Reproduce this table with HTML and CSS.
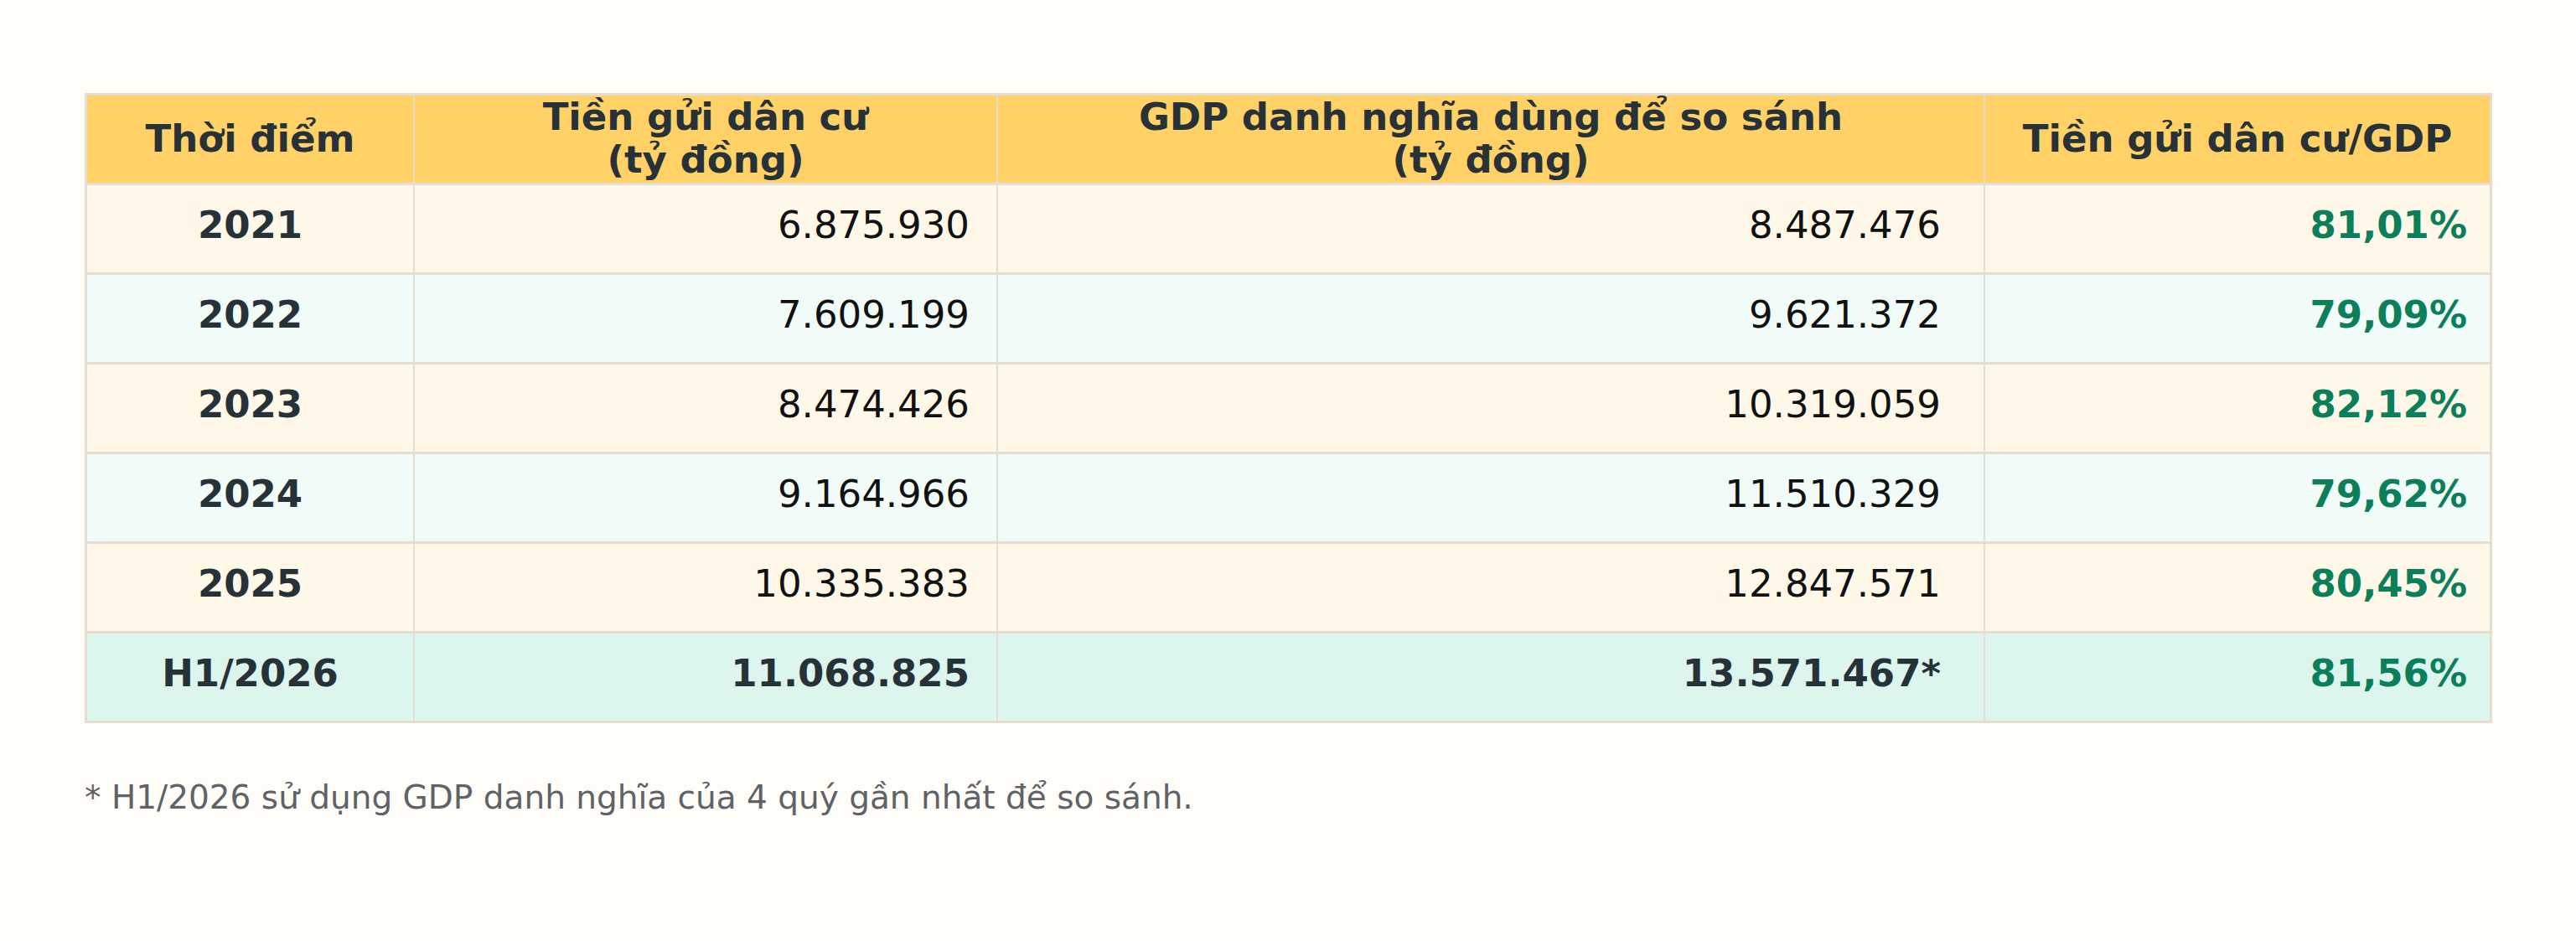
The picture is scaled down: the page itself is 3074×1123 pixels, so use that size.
FILE: index.html
```html
<!DOCTYPE html>
<html lang="vi">
<head>
<meta charset="utf-8">
<title>Tiền gửi dân cư / GDP</title>
<link rel="stylesheet" href="styles.css">
</head>
<body>
<main class="page">
  <table class="data">
    <colgroup>
      <col class="c1"><col class="c2"><col class="c3"><col class="c4">
    </colgroup>
    <thead>
      <tr>
        <th>Thời điểm</th>
        <th>Tiền gửi dân cư<br>(tỷ đồng)</th>
        <th>GDP danh nghĩa dùng để so sánh<br>(tỷ đồng)</th>
        <th>Tiền gửi dân cư/GDP</th>
      </tr>
    </thead>
    <tbody>
      <tr class="odd"><td class="year">2021</td><td class="num n2">6.875.930</td><td class="num n3">8.487.476</td><td class="pct">81,01%</td></tr>
      <tr class="even"><td class="year">2022</td><td class="num n2">7.609.199</td><td class="num n3">9.621.372</td><td class="pct">79,09%</td></tr>
      <tr class="odd"><td class="year">2023</td><td class="num n2">8.474.426</td><td class="num n3">10.319.059</td><td class="pct">82,12%</td></tr>
      <tr class="even"><td class="year">2024</td><td class="num n2">9.164.966</td><td class="num n3">11.510.329</td><td class="pct">79,62%</td></tr>
      <tr class="odd"><td class="year">2025</td><td class="num n2">10.335.383</td><td class="num n3">12.847.571</td><td class="pct">80,45%</td></tr>
      <tr class="last"><td class="year">H1/2026</td><td class="num n2 strong">11.068.825</td><td class="num n3 strong">13.571.467*</td><td class="pct">81,56%</td></tr>
    </tbody>
  </table>
  <p class="note">* H1/2026 sử dụng GDP danh nghĩa của 4 quý gần nhất để so sánh.</p>
</main>
</body>
</html>
```

FILE: styles.css
```css
html, body {
  margin: 0;
  padding: 0;
  background: #fffdf7;
}
body {
  font-family: "DejaVu Sans", "Noto Sans", sans-serif;
  color: #263238;
}
.page {
  padding: 111px 0 0 101px;
}
.data {
  width: 2873px;
  table-layout: fixed;
  border-collapse: separate;
  border-spacing: 0;
  border: 3px solid #e6ddd0;
  font-size: 45px;
  line-height: 52px;
}
.c1 { width: 391px; }
.c2 { width: 696px; }
.c3 { width: 1178px; }
.c4 { width: 602px; }

.data th,
.data td {
  box-sizing: border-box;
  border-right: 2px solid #e6ddd0;
}
.data th:last-child,
.data td:last-child {
  border-right: none;
}
.data th {
  background: #ffd166;
  font-weight: bold;
  text-align: center;
  vertical-align: middle;
  line-height: 51px;
  padding: 0 10px 2px 10px;
  height: 104px;
  color: #263238;
}
.data td {
  border-top: 3px solid #e6ddd0;
  padding: 22px 30px 30px 10px;
}
.odd td { background: #fff8e8; }
.even td { background: #f1fbf8; }
.last td { background: #dcf6ee; }

.year {
  text-align: center;
  font-weight: bold;
  color: #263238;
}
.data td.year { padding-right: 10px; }
.num {
  text-align: right;
  color: #111111;
}
.data td.n2 { padding-right: 32px; }
.data td.n3 { padding-right: 51px; }
.num.strong {
  font-weight: bold;
  color: #263238;
}
.pct {
  text-align: right;
  font-weight: bold;
  color: #0a7f5a;
}
.data td.pct { padding-right: 27px; }

.note {
  margin: 65px 0 0 0;
  font-size: 39px;
  line-height: 47px;
  color: #5f6368;
}
```
